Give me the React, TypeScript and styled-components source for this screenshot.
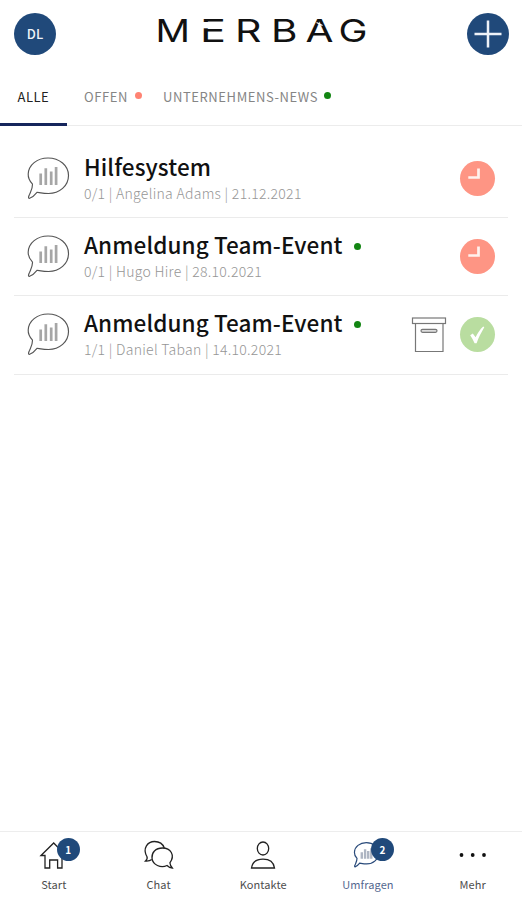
import React from "react";
import styled, { createGlobalStyle } from "styled-components";

const Global = createGlobalStyle`
  *, *::before, *::after { box-sizing: border-box; }
  html, body, #root { height: 100%; }
  body {
    margin: 0;
    background: #fff;
    color: #111;
    font-family: "Noto Sans CJK SC", "Noto Sans", sans-serif;
  }
  button { font: inherit; border: 0; padding: 0; background: none; color: inherit; }
`;

const Screen = styled.div`
  display: flex;
  flex-direction: column;
  width: 522px;
  height: 900px;
  overflow: hidden;
  background: #fff;
`;

const Header = styled.header`
  display: flex;
  justify-content: space-between;
  align-items: flex-start;
  height: 73px;
  padding: 13px 13px 0 14px;
`;

const RoundButton = styled.button`
  display: grid;
  place-items: center;
  width: 42px;
  height: 42px;
  padding-bottom: 1px;
  border-radius: 50%;
  background: #20497a;
  color: #eef2f8;
  font-size: 13px;
  font-weight: 500;
  line-height: 1;
`;

const Logo = styled.svg`
  display: block;
  width: 212px;
  height: 34px;
  font-family: Inter, sans-serif;
  font-size: 31px;
  font-weight: 400;
  fill: #111;
`;

const Tabs = styled.nav`
  display: flex;
  height: 53px;
  border-bottom: 1px solid #ececec;
`;

const Tab = styled.button<{ $active?: boolean; $width: number; $inset: number; $spacing: number }>`
  display: flex;
  align-items: flex-start;
  width: ${(p) => p.$width}px;
  height: 53px;
  padding: 14px 0 0 ${(p) => p.$inset}px;
  border-bottom: ${(p) => (p.$active ? "3px solid #16265c" : "0")};
  color: ${(p) => (p.$active ? "#222" : "#858585")};
  font-size: 13px;
  line-height: 20px;
  letter-spacing: ${(p) => p.$spacing}px;
  white-space: nowrap;
`;

const Dot = styled.span<{ $color: string; $gap: number; $top?: number }>`
  flex: none;
  width: 7px;
  height: 7px;
  margin: ${(p) => p.$top ?? 0}px 0 0 ${(p) => p.$gap}px;
  border-radius: 50%;
  background: ${(p) => p.$color};
`;

const List = styled.ul`
  flex: 1;
  margin: 0;
  padding: 14px 14px 0;
  list-style: none;
`;

const Row = styled.li`
  display: flex;
  align-items: center;
  height: 78.2px;
  padding: 0 13px;
  border-bottom: 1px solid #ebebeb;
`;

const RowText = styled.div`
  flex: 1;
  padding-left: 14px;
`;

const Title = styled.div<{ $spacing: number }>`
  display: flex;
  align-items: center;
  height: 28px;
  font-size: 22.5px;
  font-weight: 500;
  line-height: 26px;
  letter-spacing: ${(p) => p.$spacing}px;
  color: #111;
  white-space: nowrap;
`;

const TitleText = styled.span`
  height: 28px;
`;

const Meta = styled.div<{ $spacing: number }>`
  height: 24px;
  font-size: 14px;
  font-weight: 300;
  line-height: 25px;
  letter-spacing: ${(p) => p.$spacing}px;
  color: #969696;
  white-space: nowrap;
`;

const Status = styled.span<{ $done?: boolean }>`
  display: grid;
  place-items: center;
  width: 35px;
  height: 35px;
  border-radius: 50%;
  background: ${(p) => (p.$done ? "#b9dda0" : "#fe9584")};
`;

const ArchiveButton = styled.button`
  width: 36px;
  height: 36px;
  margin-right: 13px;
`;

const Icon = styled.svg`
  display: block;
  fill: none;
  overflow: visible;
`;

const BottomBar = styled.nav`
  display: grid;
  grid-template-columns: repeat(5, 104.7px);
  padding-left: 1.5px;
  height: 69px;
  border-top: 1px solid #ededed;
`;

const NavItem = styled.button<{ $active?: boolean }>`
  display: flex;
  flex-direction: column;
  align-items: center;
  padding-top: 8px;
  color: ${(p) => (p.$active ? "#54678f" : "#4d4d4d")};
  font-size: 11px;
  line-height: 18px;
  letter-spacing: 0.1px;
`;

const NavIcon = styled.span`
  position: relative;
  width: 32px;
  height: 32px;
  margin-bottom: 3px;
`;

const Badge = styled.span`
  position: absolute;
  top: -2px;
  left: 19px;
  display: grid;
  place-items: center;
  width: 23px;
  height: 23px;
  border-radius: 50%;
  background: #20497a;
  color: #fff;
  font-size: 10px;
  font-weight: 700;
  line-height: 1;
`;

const BrandLogo = () => (
  <Logo viewBox="155 13 212 34" role="img" aria-label="MERBAG">
    <text x="154.5" y="41.5" textLength="34.5" lengthAdjust="spacingAndGlyphs">M</text>
    <text x="199" y="41.5" textLength="26" lengthAdjust="spacingAndGlyphs">E</text>
    <rect x="199" y="22" width="10" height="6.3" fill="#fff" />
    <text x="234" y="41.5" textLength="26.5" lengthAdjust="spacingAndGlyphs">R</text>
    <text x="270" y="41.5" textLength="26.5" lengthAdjust="spacingAndGlyphs">B</text>
    <text x="304.5" y="41.5" textLength="28" lengthAdjust="spacingAndGlyphs">A</text>
    <path d="M315.5 22.5L321.5 25.5" stroke="#fff" strokeWidth="1.1" />
    <text x="337.5" y="41.5" textLength="29" lengthAdjust="spacingAndGlyphs">G</text>
  </Logo>
);

const bubble =
  "M5.5 27.2C2.6 24 1 20.6 1.2 17C1.6 8 10 1 21 1C32.5 1 41.5 8.5 41.5 18.5C41.5 29 32.5 36.5 21.5 36.5C17 36.5 13 35.7 10 35.3C7.5 38.5 5 40.5 2.2 41.5C1 41.2 1.5 39.5 2.5 37.5C4 34 5.6 31.5 5.5 27.2Z";

const SurveyIcon = () => (
  <Icon width="43" height="43" viewBox="0 0 43 43">
    <path d={bubble} stroke="#555" strokeWidth="1.15" />
    <path d="M13.7 16.5V28M18.8 11.3V28M24.2 14.5V28M29.1 10V28" stroke="#a6a6a6" strokeWidth="2.7" />
  </Icon>
);

const ClockHands = () => (
  <Icon width="35" height="35" viewBox="0 0 35 35">
    <path d="M18.5 7.5V16.5H8.3" stroke="#fff2ee" strokeWidth="2.7" />
  </Icon>
);

const Check = () => (
  <Icon width="35" height="35" viewBox="0 0 35 35">
    <path d="M10.2 18.2L12.8 16.6L15.6 20.3C17.6 16.2 20 12.6 23.2 9.6L24.3 10.3C21.3 15.5 18.5 20.6 16.6 26.3H14.6C13.4 23.4 12 20.7 10.2 18.2Z" fill="#fff" />
  </Icon>
);

const ArchiveIcon = () => (
  <Icon width="36" height="36" viewBox="0 0 36 36" stroke="#777" strokeWidth="1.2">
    <rect x="1.5" y="1" width="33" height="5.5" />
    <path d="M4.5 6.5V34.5H32V6.5" />
    <rect x="10" y="12.3" width="16" height="3" rx="1.5" fill="#ddd" />
  </Icon>
);

const HomeIcon = () => (
  <Icon width="32" height="32" viewBox="0 0 32 32" stroke="#222" strokeWidth="1.3">
    <path d="M3 15.5L15.7 3L28 15.5H24V28H19.6V20H11.7V28H7V15.5Z" />
  </Icon>
);

const ChatIcon = () => (
  <Icon width="32" height="32" viewBox="0 0 32 32" stroke="#222" strokeWidth="1.3">
    <path d="M8.8 19.5C7.5 20.5 5 21.2 2.5 21C4 19.8 4.5 18.2 4 16.8C-1 8 5 1.5 11.5 1.5C16.5 1.5 20 4.2 21.3 8" />
    <path d="M26.9 22.8C32.5 15 27.5 8 19.5 8C12.5 8 8.5 12.5 9 18C9.5 25 18 28.5 24 25.5C25.5 27 27.5 28 29.3 28C28 26.5 27 24.8 26.9 22.8Z" />
  </Icon>
);

const ContactIcon = () => (
  <Icon width="32" height="32" viewBox="0 0 32 32" stroke="#222" strokeWidth="1.3">
    <ellipse cx="16" cy="8.5" rx="5.7" ry="6.5" />
    <path d="M4.5 28C5.3 22.5 9.5 19.2 16 19.2C22.5 19.2 26.7 22.5 27.5 28Z" />
  </Icon>
);

const SmallSurveyIcon = () => (
  <Icon width="32" height="32" viewBox="0 0 32 32">
    <g transform="translate(1.7 2) scale(.6)">
      <path d={bubble} stroke="#294a7a" strokeWidth="2" />
      <path d="M13.5 17V28M19 12V28M24.2 15V28M29.3 10.5V28" stroke="#aeb5c2" strokeWidth="4" />
    </g>
  </Icon>
);

const MoreIcon = () => (
  <Icon width="32" height="32" viewBox="0 0 32 32">
    <g fill="#111">
      <circle cx="4.5" cy="15" r="1.9" />
      <circle cx="15.7" cy="15" r="1.9" />
      <circle cx="27" cy="15" r="1.9" />
    </g>
  </Icon>
);

const GREEN = "#138613";

const surveys = [
  { title: "Hilfesystem", meta: "0/1 | Angelina Adams | 21.12.2021", done: false, news: false },
  { title: "Anmeldung Team-Event", meta: "0/1 | Hugo Hire | 28.10.2021", done: false, news: true },
  { title: "Anmeldung Team-Event", meta: "1/1 | Daniel Taban | 14.10.2021", done: true, news: true },
];

const navItems = [
  { label: "Start", icon: <HomeIcon />, badge: 1 },
  { label: "Chat", icon: <ChatIcon /> },
  { label: "Kontakte", icon: <ContactIcon /> },
  { label: "Umfragen", icon: <SmallSurveyIcon />, badge: 2, active: true },
  { label: "Mehr", icon: <MoreIcon /> },
];

export default function App() {
  return (
    <Screen>
      <Global />
      <Header>
        <RoundButton>DL</RoundButton>
        <BrandLogo />
        <RoundButton aria-label="Neu">
          <Icon width="28" height="28" viewBox="0 0 28 28">
            <path d="M14 .5V27.5M.5 14H27.5" stroke="#eef2f8" strokeWidth="2.5" />
          </Icon>
        </RoundButton>
      </Header>
      <Tabs>
        <Tab $active $width={67} $inset={17.5} $spacing={0.5}>ALLE</Tab>
        <Tab $width={80} $inset={17} $spacing={0.6}>
          OFFEN<Dot $color="#ff8373" $gap={7} $top={5} />
        </Tab>
        <Tab $width={200} $inset={16} $spacing={0.58}>
          UNTERNEHMENS-NEWS<Dot $color={GREEN} $gap={6} $top={5} />
        </Tab>
      </Tabs>
      <List>
        {surveys.map((s, i) => (
          <Row key={i}>
            <SurveyIcon />
            <RowText>
              <Title $spacing={0.1}>
                <TitleText>{s.title}</TitleText>
                {s.news && <Dot $color={GREEN} $gap={11.5} $top={3} />}
              </Title>
              <Meta $spacing={0.29}>{s.meta}</Meta>
            </RowText>
            {s.done && (
              <ArchiveButton aria-label="Archivieren">
                <ArchiveIcon />
              </ArchiveButton>
            )}
            <Status $done={s.done}>{s.done ? <Check /> : <ClockHands />}</Status>
          </Row>
        ))}
      </List>
      <BottomBar>
        {navItems.map((n) => (
          <NavItem key={n.label} $active={n.active}>
            <NavIcon>
              {n.icon}
              {n.badge && <Badge>{n.badge}</Badge>}
            </NavIcon>
            {n.label}
          </NavItem>
        ))}
      </BottomBar>
    </Screen>
  );
}
